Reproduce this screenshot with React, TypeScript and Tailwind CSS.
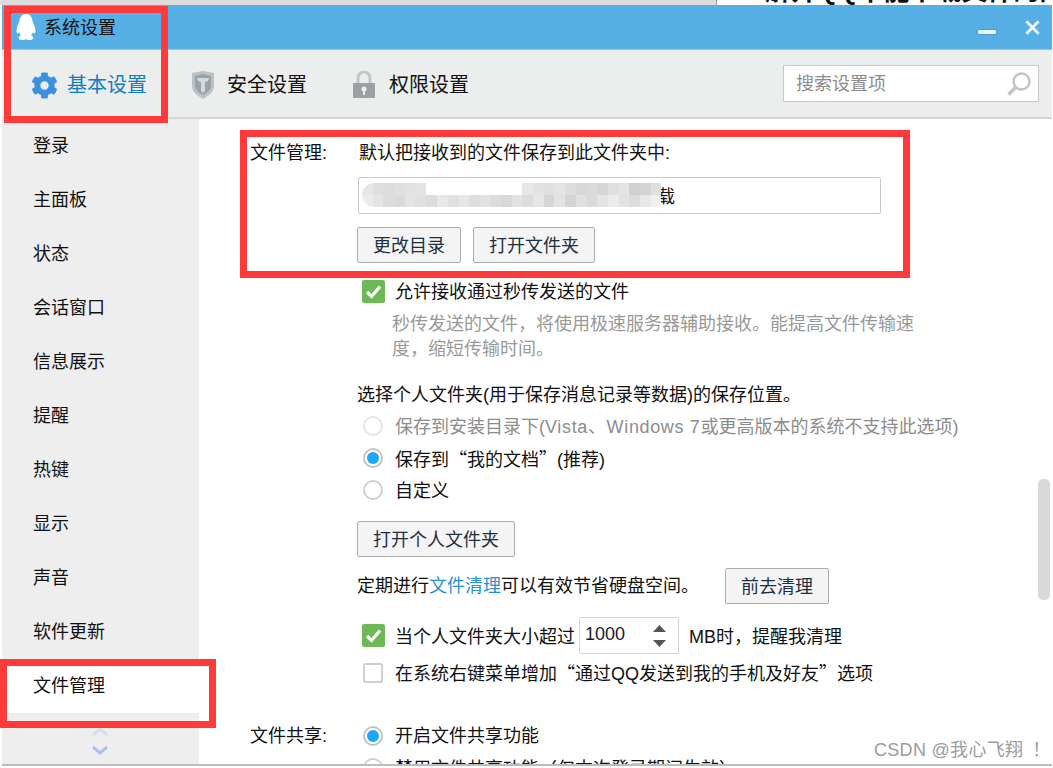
import { FaCog } from 'react-icons/fa';

const FONT = "font-['Liberation_Sans','Noto_Sans_CJK_SC',sans-serif]";
const NAV = ['登录', '主面板', '状态', '会话窗口', '信息展示', '提醒', '热键', '显示', '声音', '软件更新', '文件管理'];

// mosaic over the private path, as in the screenshot
const MOSAIC_TOP = ['#e6e6e6', '#dedede', '#dcdcdc', '#e0e0e0', '#e2e2e2', '#e4e4e4', '#fff', '#fff', '#fff', '#fff', '#fff', '#fff', '#fff', '#fff', '#fff', '#e6e6e6', '#e2e2e2', '#e0e0e0', '#e4e4e4', '#dddddd', '#d8d8d8', '#dadada', '#d6d6d6', '#e0e0e0', '#e4e4e4', '#d0d0d0', '#d4d4d4', '#e0e0e0'];
const MOSAIC_BOTTOM = ['#ececec', '#e4e4e4', '#dcdcdc', '#dadada', '#e4e4e4', '#e0e0e0', '#dcdcdc', '#e8e8e8', '#e0e0e0', '#e6e6e6', '#dedede', '#e2e2e2', '#dcdcdc', '#d8d8d8', '#e2e2e2', '#dcdcdc', '#e6e6e6', '#d6d6d6', '#e2e2e2', '#d4d4d4', '#e0e0e0', '#dadada', '#e4e4e4', '#ececec', '#e2e2e2', '#dddddd', '#e8e8e8', '#f0f0f0'];

function QQLogo() {
  return (
    <svg width="20" height="26" viewBox="0 0 20 26" fill="#fff">
      <path d="M10 0C5.600 0 3.600 3.600 3.400 7.600 2.800 9.400 1 12.400.6 15.600c-.3 2.400.3 4 1 4 .5 0 1-.7 1.400-1.500.3 1.300 1 2.500 1.900 3.400-1.300.5-2.300 1.300-2.300 2.200C2.600 25.200 4.400 26 6.800 26c1.400 0 2.500-.4 3.200-1 .7.6 1.800 1 3.200 1 2.400 0 4.200-.8 4.200-2.300 0-.9-1-1.700-2.300-2.200.9-.9 1.600-2.100 1.900-3.400.4.800.9 1.500 1.400 1.500.7 0 1.300-1.600 1-4-.4-3.200-2.200-6.200-2.800-8C16.400 3.600 14.400 0 10 0z" />
    </svg>
  );
}

function Shield() {
  return (
    <svg width="24" height="28" viewBox="0 0 24 28">
      <path d="M1 2 12 0l11 2v13c0 6-6 10-11 13C7 25 1 21 1 15z" fill="#bcc1c5" />
      <path d="M4 5l8-2 8 2v10c0 4-4 7-8 9-4-2-8-5-8-9z" fill="#9aa2a7" />
      <path d="M6 7h12l-1 3-3 1v9l-2 2-2-2v-9l-3-1z" fill="#d6d9db" />
    </svg>
  );
}

function Lock() {
  return (
    <svg width="24" height="28" viewBox="0 0 24 28">
      <path d="M6 12V7a6 6 0 0 1 12 0v5" fill="none" stroke="#c3c6c9" strokeWidth="3" />
      <rect x="1" y="12" width="22" height="15" rx="1" fill="#9aa0a6" />
      <circle cx="12" cy="18" r="2.500" fill="#eceded" />
      <rect x="11" y="18" width="2" height="6" fill="#eceded" />
    </svg>
  );
}

function Check({ on }: { on?: boolean }) {
  if (!on) return <span className="ml-[1px] h-[20px] w-[20px] shrink-0 rounded-[2px] border-2 border-[#d0d0d0] bg-white" />;
  return (
    <span className="flex h-[23px] w-[23px] shrink-0 items-center justify-center rounded-[2px] bg-[#6cb955]">
      <svg width="17" height="15" viewBox="0 0 17 15">
        <path d="M2 8l4.500 4.500L15 2.500" fill="none" stroke="#fff" strokeWidth="3.200" />
      </svg>
    </span>
  );
}

function Radio({ on, faded }: { on?: boolean; faded?: boolean }) {
  return (
    <span className={`flex h-[20px] w-[20px] shrink-0 items-center justify-center rounded-full border-2 bg-white ${faded ? 'border-[#e4e4e4]' : on ? 'border-[#c4c4c4]' : 'border-[#d0d0d0]'}`}>
      {on && <span className="h-[12px] w-[12px] rounded-full bg-[#1ea7f5]" />}
    </span>
  );
}

function Btn({ label, className }: { label: string; className: string }) {
  return (
    <button className={`flex shrink-0 items-center justify-center rounded-[2px] border border-[#adadad] bg-[#f4f4f4] pt-[2px] text-[18px] text-[#1d2f40] ${className}`}>
      {label}
    </button>
  );
}

function Quote({ children }: { children: string }) {
  return <span className="font-['Noto_Sans_CJK_SC',sans-serif]">{children}</span>;
}

function RadioRow({ on, faded, children }: { on?: boolean; faded?: boolean; children: React.ReactNode }) {
  return (
    <div className="ml-[363px] flex h-[32px] items-center gap-[12px]">
      <Radio on={on} faded={faded} />
      <span className={`pt-[2px] ${faded ? 'text-[#8c8c8c]' : 'text-[#111]'}`}>{children}</span>
    </div>
  );
}

export default function App() {
  return (
    <div className={`${FONT} relative h-[768px] w-[1053px] overflow-hidden bg-white text-[18px] leading-none text-[#111]`}>
      {/* page behind the dialog, only a sliver shows */}
      <div className="flex h-[5px] overflow-hidden">
        <div className="w-[716px] shrink-0 bg-[#dcdcdc]" />
        <div className="min-w-0 flex-1 overflow-hidden border-l border-[#999] bg-white pl-[48px] text-[26px] font-bold whitespace-nowrap">
          <span className="relative -top-[22px] block">解开QQ不能下载文件的问题</span>
        </div>
      </div>

      <div className="ml-[2px] mr-[1px] flex h-[761px] flex-col overflow-hidden border-b-2 border-[#bdbdbd] bg-white">
        <div className="flex h-[45px] shrink-0 items-center justify-between border-b border-[#8cc8ee] bg-[#56b0e6] pr-[11px] pl-[14px]">
          <div className="flex items-center gap-[8px]">
            <QQLogo />
            <span className="pt-[2px]">系统设置</span>
          </div>
          <div className="flex items-center gap-[28px]">
            <span className="mt-[10px] h-[4px] w-[18px] rounded-[1px] bg-[#e9f4fb] shadow-[0_0_2px_#2a6f9c]" />
            <svg width="17" height="17" viewBox="0 0 18 18">
              <path d="M2.500 2.500l13 13M15.500 2.500l-13 13" stroke="#f2f8fc" strokeWidth="3" />
            </svg>
          </div>
        </div>

        <div className="flex h-[69px] shrink-0 items-center border-b-2 border-[#d6d6d6] bg-[#eceded]">
          <div className="mt-[3px] ml-[29px] flex items-center gap-[9px] text-[20px] text-[#0f7cc4]">
            <FaCog className="h-[27px] w-[27px] text-[#3c90e2]" />
            <span>基本设置</span>
          </div>
          <div className="mt-[3px] ml-[44px] flex items-center gap-[12px] text-[20px] text-[#111]">
            <Shield />
            <span>安全设置</span>
          </div>
          <div className="mt-[3px] ml-[45px] flex items-center gap-[13px] text-[20px] text-[#111]">
            <Lock />
            <span>权限设置</span>
          </div>
          <div className="mr-[13px] ml-auto flex h-[37px] w-[256px] items-center justify-between border border-[#c8c8c8] bg-white pr-[6px] pl-[12px] text-[#8c8c8c]">
            <span>搜索设置项</span>
            <svg width="26" height="26" viewBox="0 0 26 26" fill="none" stroke="#c4c4c4">
              <circle cx="15.500" cy="10.500" r="8" strokeWidth="2.500" />
              <path d="M9.500 16.500l-7 7" strokeWidth="3.500" />
            </svg>
          </div>
        </div>

        <div className="flex min-h-0 flex-1">
          <aside className="flex w-[197px] shrink-0 flex-col bg-[#eeeeee]">
            {NAV.map((n, i) => (
              <div key={n} className={`flex h-[54px] shrink-0 items-center pl-[31px] ${i === NAV.length - 1 ? 'bg-white' : ''}`}>
                {n}
              </div>
            ))}
            <div className="mt-[14px] flex flex-col items-center gap-[8px] pr-[2px]">
              <svg width="16" height="10" viewBox="0 0 16 10"><path d="M1 8l7-6 7 6" fill="none" stroke="#d3dff0" strokeWidth="3" /></svg>
              <svg width="16" height="10" viewBox="0 0 16 10"><path d="M1 2l7 6 7-6" fill="none" stroke="#a9c3e6" strokeWidth="3" /></svg>
            </div>
          </aside>

          <main className="relative min-w-0 flex-1 overflow-hidden">
            <div className="-ml-[199px] pt-[22px]">
              <div className="ml-[250px] flex h-[24px] items-center">
                <span className="w-[109px]">文件管理:</span>
                <span>默认把接收到的文件保存到此文件夹中:</span>
              </div>
              <div className="relative mt-[12px] ml-[358px] flex h-[37px] w-[523px] items-center overflow-hidden rounded-[2px] border border-[#c9c9c9] pl-[298px]">
                <span className="pt-[2px]">载</span>
                <div className="absolute top-[5px] left-[3px] flex flex-col overflow-hidden rounded-l-[12px] blur-[0.6px]">
                  <div className="flex">
                    {MOSAIC_TOP.map((c, i) => (
                      <span key={i} className="h-[12px] w-[10.7px]" style={{ backgroundColor: c }} />
                    ))}
                  </div>
                  <div className="flex">
                    {MOSAIC_BOTTOM.map((c, i) => (
                      <span key={i} className="h-[12px] w-[10.7px]" style={{ backgroundColor: c }} />
                    ))}
                  </div>
                </div>
              </div>
              <div className="mt-[13px] ml-[357px] flex gap-[12px]">
                <Btn label="更改目录" className="h-[36px] w-[104px]" />
                <Btn label="打开文件夹" className="h-[36px] w-[122px]" />
              </div>
              <div className="mt-[16px] ml-[362px] flex h-[24px] items-center gap-[10px]">
                <Check on />
                <span className="pt-[2px]">允许接收通过秒传发送的文件</span>
              </div>
              <p className="mt-[9px] ml-[392px] w-[530px] leading-[25px] text-[#999]">
                秒传发送的文件，将使用极速服务器辅助接收。能提高文件传输速度，缩短传输时间。
              </p>
              <div className="mt-[20px] ml-[357px] flex h-[24px] items-center pt-[2px]">选择个人文件夹(用于保存消息记录等数据)的保存位置。</div>
              <div className="mt-[4px]">
                <RadioRow faded>
                  保存到安装目录下(<span className="tracking-[0.65px]">Vista、Windows 7</span>或更高版本的系统不支持此选项)
                </RadioRow>
                <RadioRow on>
                  保存到<Quote>“</Quote>我的文档<Quote>”</Quote>(推荐)
                </RadioRow>
                <RadioRow>自定义</RadioRow>
              </div>
              <Btn label="打开个人文件夹" className="mt-[15px] ml-[357px] h-[36px] w-[158px]" />
              <div className="mt-[11px] ml-[357px] flex h-[36px] items-center">
                <span>定期进行<span className="text-[#2b8fd6]">文件清理</span>可以有效节省硬盘空间。</span>
                <Btn label="前去清理" className="ml-[26px] h-[36px] w-[104px]" />
              </div>
              <div className="mt-[13px] ml-[362px] flex h-[37px] items-center">
                <Check on />
                <span className="ml-[10px] pt-[3px]">当个人文件夹大小超过</span>
                <div className="ml-[4px] flex h-[37px] w-[100px] items-center justify-between rounded-[2px] border border-[#d4d4d4] pr-[12px] pl-[5px]">
                  <span className="-mt-[3px] text-[#1a1a2a]">1000</span>
                  <span className="flex flex-col gap-[8px]">
                    <svg width="13" height="7" viewBox="0 0 13 7"><path d="M6.500 0L13 7H0z" fill="#555" /></svg>
                    <svg width="13" height="7" viewBox="0 0 13 7"><path d="M0 0h13L6.500 7z" fill="#555" /></svg>
                  </span>
                </div>
                <span className="ml-[10px] pt-[3px]">MB时，提醒我清理</span>
              </div>
              <div className="mt-[5px] ml-[362px] flex h-[28px] items-center">
                <Check />
                <span className="ml-[12px]">在系统右键菜单增加<Quote>“</Quote>通过QQ发送到我的手机及好友<Quote>”</Quote>选项</span>
              </div>
              <div className="mt-[33px] flex h-[32px] items-center">
                <span className="ml-[250px] w-[113px]">文件共享:</span>
                <Radio on />
                <span className="ml-[12px]">开启文件共享功能</span>
              </div>
              <RadioRow>禁用文件共享功能（仅本次登录期间生效）</RadioRow>
            </div>
            {/* scrollbar thumb */}
            <div className="absolute top-[360px] right-[2px] h-[121px] w-[12px] rounded-[5px] bg-[#d9d9d9]" />
          </main>
        </div>
      </div>

      {/* annotation boxes and watermark sit over the screenshot */}
      <div className="absolute top-[6px] left-[4px] h-[117px] w-[164px] border-[7px] border-[#fe3a3a]" />
      <div className="absolute top-[130px] left-[240px] h-[148px] w-[670px] border-[7px] border-[#fe3a3a]" />
      <div className="absolute top-[659px] left-0 h-[69px] w-[216px] border-[7px] border-[#fe3a3a]" />
      <div className="absolute top-[741px] left-[874px] text-[18px] tracking-[0.3px] whitespace-nowrap text-[#9c9c9c] [text-shadow:0_0_2px_#fff]">
        CSDN @我心飞翔<span className="ml-[9px]">！</span>
      </div>
    </div>
  );
}
